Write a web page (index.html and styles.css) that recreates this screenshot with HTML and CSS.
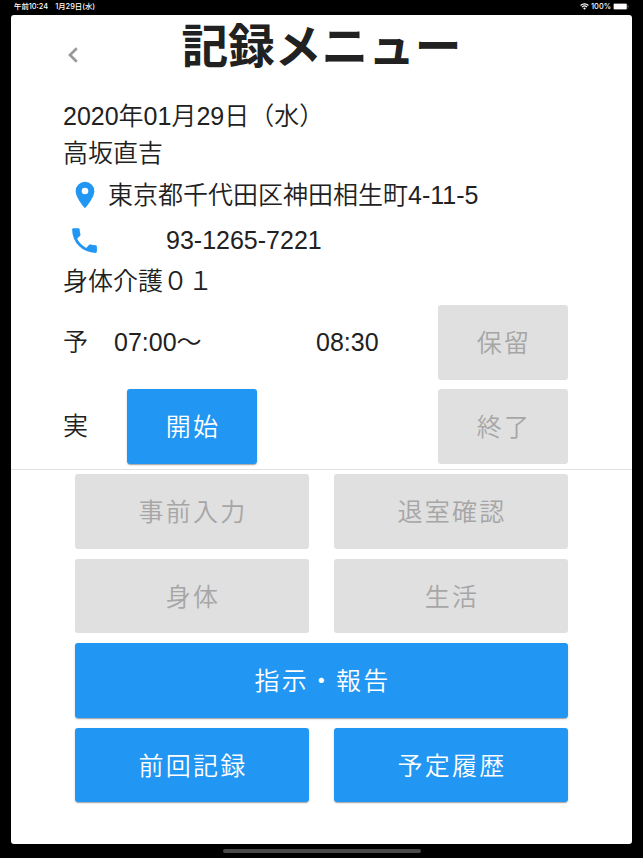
FILE: index.html
```html
<!DOCTYPE html>
<html lang="ja">
<head>
    <meta charset="UTF-8">
    <meta name="viewport" content="width=device-width, initial-scale=1.0">
    <title>記録メニュー</title>
    <link rel="stylesheet" href="styles.css">
</head>
<body>
    <div class="status-bar">
        <div class="status-left">
            <span>午前10:24</span>
            <span>1月29日(水)</span>
        </div>
        <div class="status-right">
            <svg class="wifi" viewBox="0 0 16 12">
                <path d="M1 4.2a10 10 0 0 1 14 0M3.5 7a6.4 6.4 0 0 1 9 0" fill="none" stroke="#fff" stroke-width="2"/>
                <path d="M5.5 9a3.6 3.6 0 0 1 5 0L8 11.6z" fill="#fff"/>
            </svg>
            <span>100%</span>
            <svg class="battery" viewBox="0 0 32 14">
                <rect x="0.5" y="0.5" width="28" height="13" rx="3.5" fill="none" stroke="#777"/>
                <rect x="1.5" y="1.5" width="26" height="11" rx="2" fill="#fff"/>
                <path d="M30 5v4c2-.6 2-3.4 0-4z" fill="#777"/>
            </svg>
        </div>
    </div>

    <main class="screen">
        <header class="title-bar">
            <button class="back">
                <svg viewBox="0 0 10 16"><path d="M8.8 1.2L2 8l6.8 6.8" fill="none" stroke="#999" stroke-width="2.7"/></svg>
            </button>
            <h1>記録メニュー</h1>
        </header>

        <section class="info">
            <p class="date">2020年01月29日（水）</p>
            <p class="name">高坂直吉</p>
            <p class="address">
                <svg viewBox="0 0 24 24"><path fill="#2196f3" d="M12 11.5A2.5 2.5 0 0 1 9.5 9 2.5 2.5 0 0 1 12 6.5 2.5 2.5 0 0 1 14.5 9 2.5 2.5 0 0 1 12 11.5M12 2A7 7 0 0 0 5 9c0 5.25 7 13 7 13s7-7.75 7-13a7 7 0 0 0-7-7z"/></svg>
                <span>東京都千代田区神田相生町4-11-5</span>
            </p>
            <p class="phone">
                <svg viewBox="0 0 24 24"><path fill="#2196f3" d="M6.62 10.79c1.44 2.83 3.76 5.15 6.59 6.59l2.2-2.2c.28-.28.67-.36 1.02-.25 1.12.37 2.32.57 3.57.57a1 1 0 0 1 1 1V20a1 1 0 0 1-1 1A17 17 0 0 1 3 4a1 1 0 0 1 1-1h3.5a1 1 0 0 1 1 1c0 1.25.2 2.45.57 3.57.11.35.03.74-.25 1.02l-2.2 2.2z"/></svg>
                <span>93-1265-7221</span>
            </p>
            <p class="service">身体介護０１</p>
        </section>

        <section class="times">
            <span class="label">予</span>
            <span class="label">07:00～</span>
            <span>08:30</span>
            <button class="btn" disabled>保留</button>
        </section>
        <section class="times actual">
            <span class="label">実</span>
            <button class="btn start">開始</button>
            <button class="btn end" disabled>終了</button>
        </section>

        <hr>

        <section class="menu">
            <button class="btn" disabled>事前入力</button>
            <button class="btn" disabled>退室確認</button>
            <button class="btn" disabled>身体</button>
            <button class="btn" disabled>生活</button>
            <button class="btn wide">指示・報告</button>
            <button class="btn">前回記録</button>
            <button class="btn">予定履歴</button>
        </section>
    </main>

    <div class="home-indicator"></div>
</body>
</html>
```
FILE: styles.css
```css
* {
    box-sizing: border-box;
}

body {
    margin: 0;
    height: 858px;
    overflow: hidden;
    background: #000;
    color: #212121;
    font-family: "Liberation Sans", "Noto Sans CJK JP DemiLight", "Noto Sans CJK JP", sans-serif;
    font-weight: 350;
    font-size: 25px;
}

h1, p {
    margin: 0;
}

button {
    padding: 0;
    border: none;
    font: inherit;
}

svg {
    display: block;
    flex: none;
}

.status-bar {
    display: flex;
    justify-content: space-between;
    height: 15px;
    padding: 0 14px;
    color: #fff;
    font-family: Inter, "Noto Sans CJK JP", sans-serif;
    font-size: 7.4px;
    font-weight: 500;
    line-height: 13px;
}

.status-left {
    display: flex;
    gap: 7px;
}

.status-right {
    display: flex;
    align-items: center;
    height: 13px;
    gap: 2px;
}

.wifi {
    width: 9px;
    height: 7px;
}

.battery {
    width: 16px;
    height: 7px;
}

.screen {
    width: 621px;
    height: 829px;
    margin-left: 11px;
    background: #fff;
    border-radius: 3px;
}

.title-bar {
    display: grid;
    grid-template-columns: 52px 1fr 52px;
    height: 82px;
}

.back {
    justify-self: end;
    align-self: start;
    width: 10px;
    margin: 32px -15px 0 0;
    background: none;
}

.back svg {
    width: 10px;
    height: 16px;
}

h1 {
    color: #212121;
    font-family: "Noto Sans CJK JP", sans-serif;
    font-size: 46.7px;
    font-weight: 700;
    line-height: 56px;
    text-align: center;
}

.info {
    height: 208px;
    padding-left: 52px;
}

.date, .name {
    height: 37.5px;
    line-height: 37.5px;
}

.date {
    line-height: 39px;
}

.address, .phone {
    display: flex;
    align-items: center;
    height: 46px;
}

.address span {
    margin-bottom: 4px;
}

.phone span {
    margin-bottom: 1px;
}

.address svg {
    width: 32px;
    height: 32px;
    margin: 0 7px 0 6px;
}

.phone svg {
    width: 33px;
    height: 33px;
    margin: 0 65px 2px 5px;
}

.service {
    line-height: 34px;
}

.times {
    display: grid;
    grid-template-columns: 51px 202px 122px 130px;
    align-items: center;
    height: 74.5px;
    padding-left: 52px;
}

.label {
    padding-bottom: 4px;
}

.actual {
    margin-top: 9.5px;
}

.start {
    width: 130px;
    margin-left: 13px;
}

.end {
    grid-column: 4;
}

.btn {
    height: 74.5px;
    padding: 0 0 2px 2px;
    border-radius: 3px;
    background: #2196f3;
    color: #fff;
    letter-spacing: 0.0893em;
    box-shadow: 0 2px 1px -1px rgba(0, 0, 0, 0.2), 0 1px 2px rgba(0, 0, 0, 0.22);
}

.btn:disabled {
    background: #e0e0e0;
    color: #a6a6a6;
    box-shadow: none;
}

hr {
    height: 1px;
    margin: 5px 0 4.5px;
    border: none;
    background: #e0e0e0;
}

.menu {
    display: grid;
    grid-template-columns: 234px 234px;
    gap: 10px 25px;
    padding-left: 64px;
}

.wide {
    grid-column: 1 / 3;
}

.home-indicator {
    width: 198px;
    height: 4px;
    margin: 5px auto 0;
    border-radius: 2px;
    background: #4a4a4a;
}
```
